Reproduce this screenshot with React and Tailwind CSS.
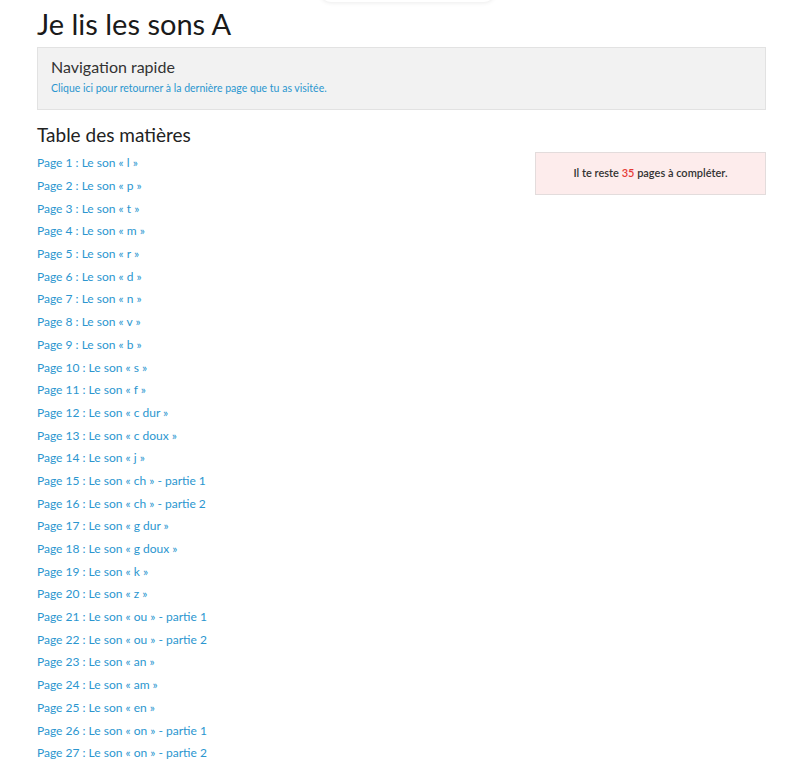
import React from 'react';

const pages = [
  'l', 'p', 't', 'm', 'r', 'd', 'n', 'v', 'b', 's', 'f', 'c dur', 'c doux', 'j',
  ['ch', 1], ['ch', 2], 'g dur', 'g doux', 'k', 'z', ['ou', 1], ['ou', 2], 'an', 'am', 'en', ['on', 1], ['on', 2],
];

const label = (p, i) =>
  Array.isArray(p)
    ? `Page ${i + 1} : Le son « ${p[0]} » - partie ${p[1]}`
    : `Page ${i + 1} : Le son « ${p} »`;

export default function App() {
  return (
    <div className="relative min-h-screen bg-white text-[#222] font-['Lato',sans-serif]">
      {/* shadow of a floating bar cut off at the top */}
      <div className="absolute left-[320px] top-[-20px] w-[175px] h-[22px] rounded-full bg-white shadow-[0_1px_4px_rgba(0,0,0,0.08)]" />

      <div className="pl-[37px] pr-[34px] pt-[6px]">
        <h1 className="text-[29px] leading-[36px] text-[#1a1a1a]">Je lis les sons A</h1>

        <div className="mt-[5px] bg-[#f2f2f2] border border-[#e2e2e2] px-[13px] pt-[9px] pb-[14px]">
          <h2 className="text-[16px] leading-[20px] text-[#333]">Navigation rapide</h2>
          <a href="#" className="block mt-[4px] text-[10.5px] leading-[14px] text-[#2b96cf]">
            Clique ici pour retourner à la dernière page que tu as visitée.
          </a>
        </div>

        <div className="flex mt-[13px]">
          <div className="flex-1">
            <h2 className="text-[19px] leading-[24px] text-[#222]">Table des matières</h2>
            <ul className="mt-[5px]">
              {pages.map((p, i) => (
                <li key={i} className="h-[22.7px] flex items-center">
                  <a href="#" className="text-[12px] text-[#2b96cf]">{label(p, i)}</a>
                </li>
              ))}
            </ul>
          </div>
          <div className="w-[231px] pt-[29px]">
            <div className="bg-[#fdecec] border border-[#e3dcdc] h-[43px] flex items-center justify-center text-[11px] font-semibold text-[#333]">
              <span>Il te reste <span className="text-[#e53935]">35</span> pages à compléter.</span>
            </div>
          </div>
        </div>
      </div>
    </div>
  );
}
